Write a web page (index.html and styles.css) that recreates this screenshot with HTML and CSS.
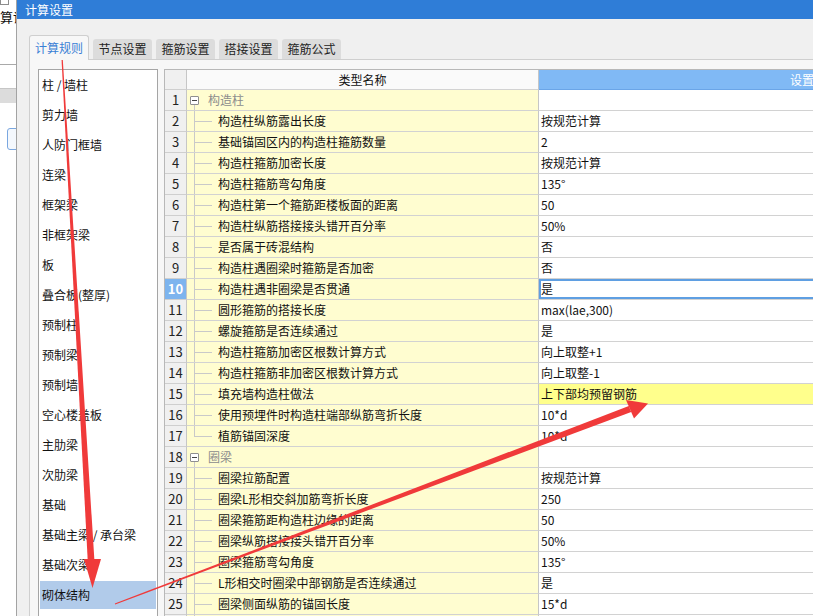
FILE: index.html
```html
<!DOCTYPE html>
<html lang="zh-CN">
<head>
<meta charset="utf-8">
<title>计算设置</title>
<link rel="stylesheet" href="styles.css">
</head>
<body>
<div class="app">
  <div class="bgapp">
    <div class="bg-top"><span class="winicon"></span><div class="bg-title">算设</div></div>
    <div class="bg-gap"></div>
    <div class="bg-band"></div>
    <div class="bg-btn"></div>
  </div>
  <div class="dialog">
    <div class="titlebar">计算设置</div>
    <div class="dlg-body">
      <div class="tabs">
        <div class="tab active">计算规则</div>
        <div class="tab">节点设置</div>
        <div class="tab">箍筋设置</div>
        <div class="tab">搭接设置</div>
        <div class="tab">箍筋公式</div>
      </div>
      <div class="panel">
        <ul class="cat-list">
          <li>柱 / 墙柱</li>
          <li>剪力墙</li>
          <li>人防门框墙</li>
          <li>连梁</li>
          <li>框架梁</li>
          <li>非框架梁</li>
          <li>板</li>
          <li>叠合板(整厚)</li>
          <li>预制柱</li>
          <li>预制梁</li>
          <li>预制墙</li>
          <li>空心楼盖板</li>
          <li>主肋梁</li>
          <li>次肋梁</li>
          <li>基础</li>
          <li>基础主梁 / 承台梁</li>
          <li>基础次梁</li>
          <li class="sel">砌体结构</li>
        </ul>
        <div class="grid">
          <div class="row head"><div class="num"></div><div class="name">类型名称</div><div class="val">设置值</div></div>
          <div class="row"><div class="num">1</div><div class="name group"><span class="minus"></span><span class="gtext">构造柱</span></div><div class="val"></div></div>
          <div class="row"><div class="num">2</div><div class="name"><span class="branch"></span><span class="ntext">构造柱纵筋露出长度</span></div><div class="val">按规范计算</div></div>
          <div class="row"><div class="num">3</div><div class="name"><span class="branch"></span><span class="ntext">基础锚固区内的构造柱箍筋数量</span></div><div class="val">2</div></div>
          <div class="row"><div class="num">4</div><div class="name"><span class="branch"></span><span class="ntext">构造柱箍筋加密长度</span></div><div class="val">按规范计算</div></div>
          <div class="row"><div class="num">5</div><div class="name"><span class="branch"></span><span class="ntext">构造柱箍筋弯勾角度</span></div><div class="val">135°</div></div>
          <div class="row"><div class="num">6</div><div class="name"><span class="branch"></span><span class="ntext">构造柱第一个箍筋距楼板面的距离</span></div><div class="val">50</div></div>
          <div class="row"><div class="num">7</div><div class="name"><span class="branch"></span><span class="ntext">构造柱纵筋搭接接头错开百分率</span></div><div class="val">50%</div></div>
          <div class="row"><div class="num">8</div><div class="name"><span class="branch"></span><span class="ntext">是否属于砖混结构</span></div><div class="val">否</div></div>
          <div class="row"><div class="num">9</div><div class="name"><span class="branch"></span><span class="ntext">构造柱遇圈梁时箍筋是否加密</span></div><div class="val">否</div></div>
          <div class="row"><div class="num cur">10</div><div class="name"><span class="branch"></span><span class="ntext">构造柱遇非圈梁是否贯通</span></div><div class="val cur">是</div></div>
          <div class="row"><div class="num">11</div><div class="name"><span class="branch"></span><span class="ntext">圆形箍筋的搭接长度</span></div><div class="val">max(lae,300)</div></div>
          <div class="row"><div class="num">12</div><div class="name"><span class="branch"></span><span class="ntext">螺旋箍筋是否连续通过</span></div><div class="val">是</div></div>
          <div class="row"><div class="num">13</div><div class="name"><span class="branch"></span><span class="ntext">构造柱箍筋加密区根数计算方式</span></div><div class="val">向上取整+1</div></div>
          <div class="row"><div class="num">14</div><div class="name"><span class="branch"></span><span class="ntext">构造柱箍筋非加密区根数计算方式</span></div><div class="val">向上取整-1</div></div>
          <div class="row"><div class="num">15</div><div class="name"><span class="branch"></span><span class="ntext">填充墙构造柱做法</span></div><div class="val hl">上下部均预留钢筋</div></div>
          <div class="row"><div class="num">16</div><div class="name"><span class="branch"></span><span class="ntext">使用预埋件时构造柱端部纵筋弯折长度</span></div><div class="val">10*d</div></div>
          <div class="row"><div class="num">17</div><div class="name"><span class="branch last"></span><span class="ntext">植筋锚固深度</span></div><div class="val">10*d</div></div>
          <div class="row"><div class="num">18</div><div class="name group"><span class="minus"></span><span class="gtext">圈梁</span></div><div class="val"></div></div>
          <div class="row"><div class="num">19</div><div class="name"><span class="branch"></span><span class="ntext">圈梁拉筋配置</span></div><div class="val">按规范计算</div></div>
          <div class="row"><div class="num">20</div><div class="name"><span class="branch"></span><span class="ntext">圈梁L形相交斜加筋弯折长度</span></div><div class="val">250</div></div>
          <div class="row"><div class="num">21</div><div class="name"><span class="branch"></span><span class="ntext">圈梁箍筋距构造柱边缘的距离</span></div><div class="val">50</div></div>
          <div class="row"><div class="num">22</div><div class="name"><span class="branch"></span><span class="ntext">圈梁纵筋搭接接头错开百分率</span></div><div class="val">50%</div></div>
          <div class="row"><div class="num">23</div><div class="name"><span class="branch"></span><span class="ntext">圈梁箍筋弯勾角度</span></div><div class="val">135°</div></div>
          <div class="row"><div class="num">24</div><div class="name"><span class="branch"></span><span class="ntext">L形相交时圈梁中部钢筋是否连续通过</span></div><div class="val">是</div></div>
          <div class="row"><div class="num">25</div><div class="name"><span class="branch"></span><span class="ntext">圈梁侧面纵筋的锚固长度</span></div><div class="val">15*d</div></div>
          <div class="row"><div class="num"></div><div class="name"><span class="branch"></span></div><div class="val"></div></div>
        </div>
      </div>
    </div>
  </div>
</div>
<svg class="annot" width="813" height="616" viewBox="0 0 813 616">
  <polygon points="61.3,55 62.5,55 94.5,562 87.8,562" fill="#f03a3a"/>
  <polygon points="84,559 101,559 92.5,588" fill="#f03a3a"/>
  <polygon points="114.8,603.4 115.2,604.6 631.2,412 628.8,406" fill="#f03a3a"/>
  <polygon points="626,400 648,403.5 634,418.5" fill="#f03a3a"/>
</svg>
</body>
</html>
```

FILE: styles.css
```css
* {
  box-sizing: border-box;
  margin: 0;
  padding: 0;
}

body {
  width: 813px;
  height: 616px;
  overflow: hidden;
  position: relative;
  background: #fff;
  color: #111;
  font-family: "Noto Sans CJK SC", "Microsoft YaHei", sans-serif;
  font-size: 12px;
}

.app {
  display: flex;
  width: 813px;
  height: 616px;
  overflow: hidden;
}

/* background application peeking on the left */
.bgapp {
  width: 16px;
  flex: none;
  background: #fff;
  overflow: hidden;
}

.bg-top {
  height: 65px;
  border-bottom: 1px solid #a9a9a9;
}

.winicon {
  display: block;
  width: 9px;
  height: 5px;
  border: 1px solid #8c8c8c;
  border-top: none;
}

.bg-title {
  margin-top: 4px;
  font-size: 13px;
  line-height: 16px;
  white-space: nowrap;
}

.bg-gap {
  height: 23px;
}

.bg-band {
  height: 15px;
  background: #dcdcdc;
  border-top: 1px solid #c6c6c6;
}

.bg-btn {
  margin: 25px 0 0 7px;
  width: 12px;
  height: 22px;
  border: 1px solid #7aa7e0;
  border-radius: 3px;
  background: #f4f8fd;
}

/* dialog */
.dialog {
  flex: 1;
  min-width: 0;
  display: flex;
  flex-direction: column;
  border-left: 1px solid #a3a3a3;
  background: #f0f0f0;
  overflow: hidden;
}

.titlebar {
  height: 19px;
  flex: none;
  background: #2f7dd7;
  color: #fff;
  font-size: 12px;
  line-height: 19px;
  padding-left: 8px;
}

.dlg-body {
  flex: 1;
  min-height: 0;
  display: flex;
  flex-direction: column;
  padding: 16px 0 0 12px;
}

.tabs {
  display: flex;
  align-items: flex-end;
  gap: 4px;
  height: 24px;
  flex: none;
}

.tab {
  width: 59px;
  height: 20px;
  line-height: 20px;
  text-align: center;
  background: #dcdcdc;
  border-radius: 3px 3px 0 0;
  color: #222;
}

.tab.active {
  width: 60px;
  height: 25px;
  line-height: 23px;
  background: #f7f7f7;
  border: 1px solid #cfcfcf;
  border-bottom: none;
  color: #3a7fd5;
  margin-bottom: -1px;
  position: relative;
  z-index: 1;
}

.panel {
  flex: 1;
  min-height: 0;
  display: flex;
  align-items: flex-start;
  gap: 6px;
  padding: 9px 0 0 8px;
  background: #f7f7f7;
  border-top: 1px solid #cfcfcf;
  border-left: 1px solid #cfcfcf;
  overflow: hidden;
}

/* category list */
.cat-list {
  list-style: none;
  flex: none;
  width: 120px;
  min-height: 600px;
  background: #fff;
  border: 1px solid #a5a5a5;
}

.cat-list li {
  height: 30px;
  padding: 1px;
  background-clip: content-box;
  line-height: 28px;
  text-indent: 2px;
  white-space: nowrap;
  color: #111;
}

.cat-list li.sel {
  background-color: #b1cbea;
}

/* property grid */
.grid {
  flex: none;
  width: 910px;
  border-top: 1px solid #b8b8b8;
  border-left: 1px solid #b8b8b8;
  background: #fff;
}

.row {
  display: flex;
  height: 21px;
}

.num {
  width: 22px;
  flex: none;
  background: #f0f0f0;
  border-right: 1px solid #c6c6c6;
  border-bottom: 1px solid #cfcfcf;
  text-align: center;
  line-height: 20px;
  font-size: 13px;
  color: #222;
}

.num.cur {
  background: #7db4ee;
  color: #fff;
  font-weight: bold;
}

.name {
  width: 352px;
  flex: none;
  display: flex;
  align-items: center;
  background: #fffdd0;
  border-right: 1px solid #c6c6c6;
  border-bottom: 1px solid #d2d2d2;
  white-space: nowrap;
}

.val {
  width: 536px;
  flex: none;
  padding-left: 2px;
  line-height: 20px;
  border-bottom: 1px solid #d2d2d2;
  white-space: nowrap;
}

.val.cur {
  box-shadow: inset 0 0 0 2px #5f9fe2;
}

.val.hl {
  background: #ffff8c;
}

.head {
  height: 20px;
}

.head .num {
  line-height: 19px;
}

.head .name {
  justify-content: center;
  background: #fafafa;
  line-height: 19px;
}

.head .val {
  background: #80b9f5;
  color: #fff;
  text-align: center;
  line-height: 19px;
  border-bottom: 1px solid #6aa5e8;
}

/* tree decoration */
.branch {
  width: 25px;
  flex: none;
  align-self: stretch;
  background:
    linear-gradient(#c9c9c9, #c9c9c9) 7px 0 / 1px 100% no-repeat,
    linear-gradient(#c9c9c9, #c9c9c9) 7px 50% / 18px 1px no-repeat;
}

.branch.last {
  background:
    linear-gradient(#c9c9c9, #c9c9c9) 7px 0 / 1px 50% no-repeat,
    linear-gradient(#c9c9c9, #c9c9c9) 7px 50% / 18px 1px no-repeat;
}

.ntext {
  margin-left: 6px;
  line-height: 20px;
}

.name.group {
  padding-left: 3px;
  background:
    linear-gradient(#c9c9c9, #c9c9c9) 7px 100% / 1px 6px no-repeat,
    #fffdd0;
}

.minus {
  width: 9px;
  height: 9px;
  flex: none;
  border: 1px solid #8f8f8f;
  border-radius: 1px;
  background: linear-gradient(#444, #444) center / 5px 1px no-repeat, #fff;
}

.gtext {
  margin-left: 9px;
  color: #8c8c8c;
  line-height: 20px;
}

/* red annotation arrows drawn over the screenshot */
.annot {
  position: absolute;
  left: 0;
  top: 0;
  pointer-events: none;
}
```
